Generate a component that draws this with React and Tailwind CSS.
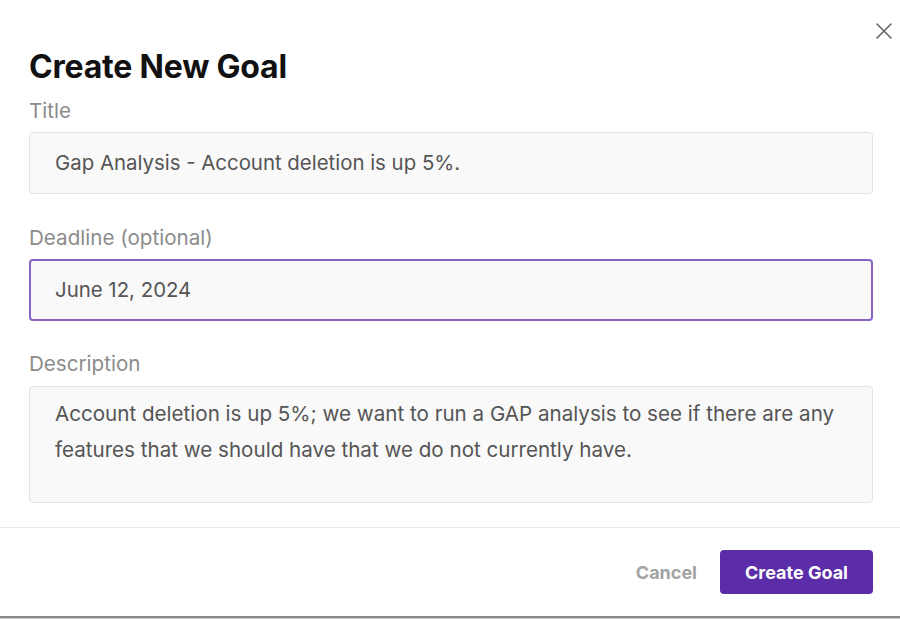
import React from "react";

export default function App() {
  return (
    <div
      className="relative flex h-[619px] w-[900px] flex-col bg-white"
      style={{ fontFamily: "Inter, 'Open Sans', sans-serif" }}
    >
      <button className="absolute right-[7px] top-[22px] flex h-[18px] w-[18px] items-center justify-center text-[#666]">
        <svg width="18" height="18" viewBox="0 0 18 18" fill="none" stroke="currentColor" strokeWidth="1.6" strokeLinecap="round">
          <path d="M2 2 L16 16 M16 2 L2 16" />
        </svg>
      </button>

      <div className="flex flex-col pl-[29px] pr-[27px] pt-[49px]">
        <h2 className="text-[32px] font-bold leading-[36px] tracking-[-0.2px] text-[#111]">Create New Goal</h2>

        <label className="mt-[14px] text-[20.6px] leading-[24px] text-[#8c8c8c]">Title</label>
        <div className="mt-[9px] flex h-[62px] items-center rounded-[4px] border border-[#e2e2e2] bg-[#f9f9f9] pl-[25px] text-[20.4px] text-[#555]">
          Gap Analysis - Account deletion is up 5%.
        </div>

        <label className="mt-[32px] text-[20.6px] leading-[24px] text-[#8c8c8c]">Deadline (optional)</label>
        <div className="mt-[9px] flex h-[62px] items-center rounded-[4px] border-2 border-[#8763c6] bg-[#f9f9f9] pl-[24px] text-[20.4px] text-[#555]">
          June 12, 2024
        </div>

        <label className="mt-[31px] text-[20.6px] leading-[24px] text-[#8c8c8c]">Description</label>
        <div className="mt-[10px] h-[117px] rounded-[4px] border border-[#e2e2e2] bg-[#f9f9f9] pl-[25px] pr-[20px] pt-[9px] text-[20.6px] leading-[36px] text-[#555]">
          Account deletion is up 5%; we want to run a GAP analysis to see if there are any features that we should have that we do not currently have.
        </div>
      </div>

      <div className="mt-[24px] h-px w-full bg-[#e8e8e8]" />

      <div className="mt-[22px] flex items-center justify-end pr-[27px]">
        <button className="mr-[23px] text-[18px] font-bold text-[#a3a3a3]">Cancel</button>
        <button className="h-[44px] w-[153px] rounded-[4px] bg-[#5b2da8] text-[18px] font-bold text-white">
          Create Goal
        </button>
      </div>

      <div className="mt-auto h-[2px] w-full bg-[#8a8a8a]" />
      <div className="h-px w-full bg-[#d0d0d0]" />
    </div>
  );
}
